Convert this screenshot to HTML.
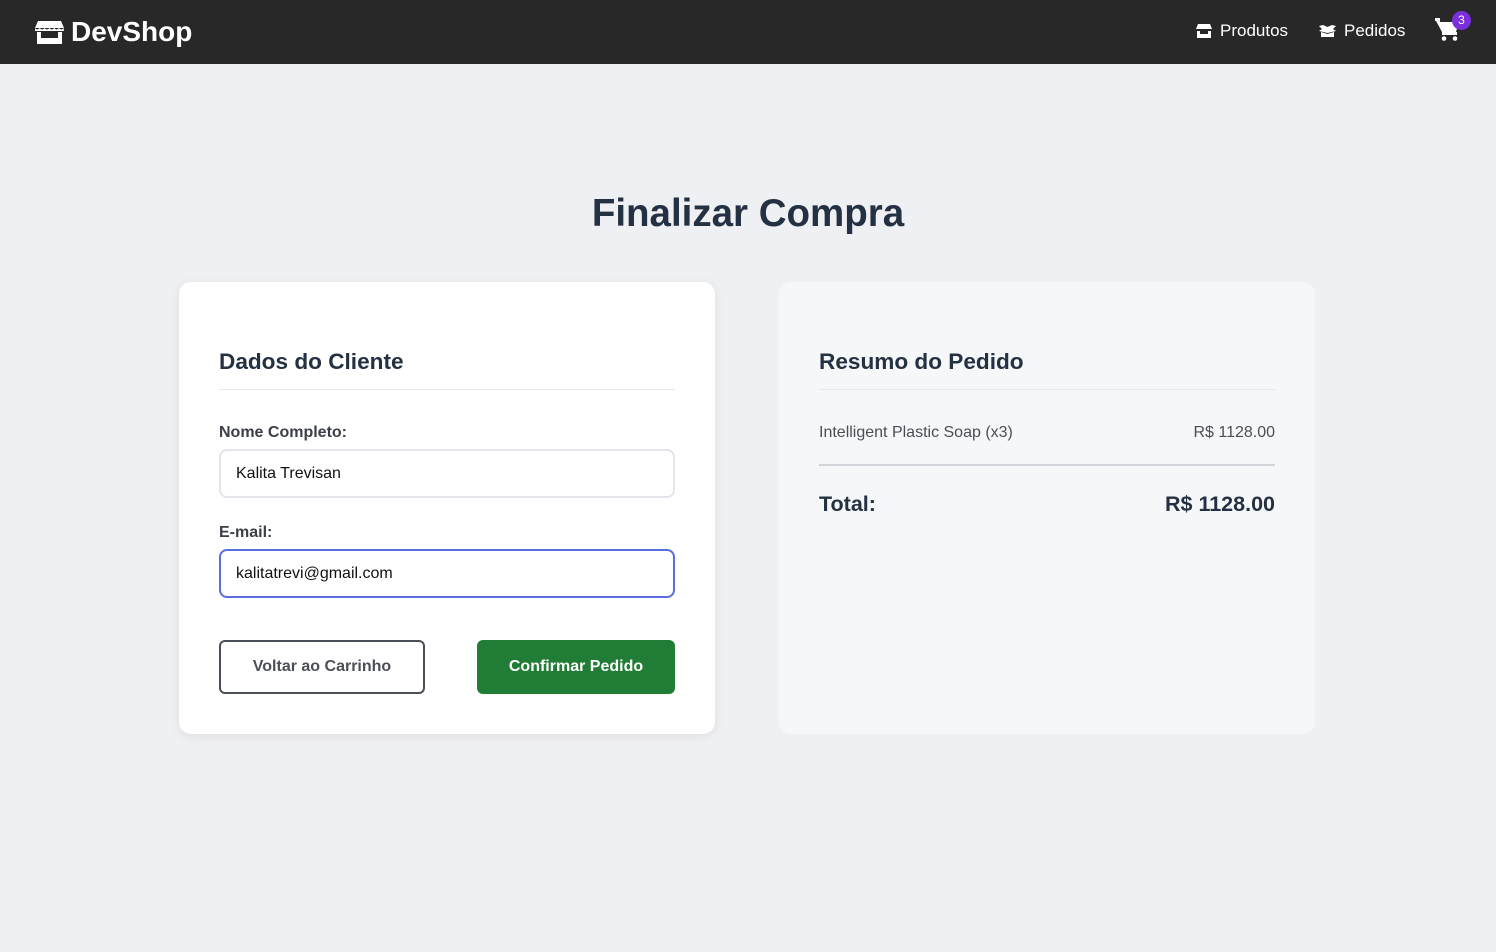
<!DOCTYPE html>
<html><head><meta charset="utf-8"><style>
*{box-sizing:border-box;margin:0;padding:0}
body{width:1496px;height:952px;background:#eff0f4;font-family:"Liberation Sans",sans-serif;position:relative;overflow:hidden}
.nav{position:absolute;left:0;top:0;width:1496px;height:64px;background:#282828;color:#fff}
.logo{position:absolute;left:35px;top:16px;font-size:28px;font-weight:bold;display:flex;align-items:center;gap:7px}
.nl{position:absolute;top:21px;font-size:17px;display:flex;align-items:center;gap:8px}
.badge{position:absolute;left:1452px;top:11px;width:19px;height:19px;border-radius:50%;background:#7b2fdc;color:#fff;font-size:12px;text-align:center;line-height:19px}
h1{position:absolute;top:192px;width:100%;text-align:center;font-size:38.5px;color:#243142;font-weight:bold}
.card{position:absolute;top:282px;width:536px;height:452px;border-radius:12px;padding:0 40px}
.c1{left:179px;background:#fff;box-shadow:0 2px 10px rgba(0,0,0,.08)}
.c2{left:779px;background:#f6f7f9}
h2{font-size:22.6px;font-weight:bold;color:#243142;margin-top:67px;padding-bottom:14px;border-bottom:1px solid #e5e7eb}
label{display:block;font-size:16px;font-weight:bold;color:#3b3f46;position:absolute;left:40px}
.inp{position:absolute;left:40px;width:456px;height:49px;border:2px solid #e2e6ec;border-radius:8px;padding-left:15px;font-size:16px;line-height:45px;color:#111}
.btn{position:absolute;top:358px;height:54px;border-radius:6px;font-size:16px;font-weight:bold;text-align:center;line-height:50px}
.row{position:absolute;left:40px;right:40px;display:flex;justify-content:space-between}
</style></head><body>
<div class="nav">
 <div class="logo"><svg width="29" height="26" viewBox="0 0 29 26"><path d="M3 2h23l3 7H0z" fill="#fff"/><path d="M0 9q2 3 4.8 0q2.4 3 4.8 0q2.4 3 4.8 0q2.4 3 4.8 0q2.4 3 4.8 0q2.4 3 4.8 0v3H0z" fill="#fff"/><path d="M2 13h4v6h17v-6h4v12H2z" fill="#fff"/></svg>DevShop</div>
 <div class="nl" style="left:1196px"><svg width="16" height="14" viewBox="0 0 16 14"><path d="M2 0h12l2 5H0z" fill="#fff"/><path d="M1 7h3v3h8V7h3v7H1z" fill="#fff"/></svg>Produtos</div>
 <div class="nl" style="left:1319px"><svg width="17" height="12" viewBox="0 0 17 12"><path d="M0 1l4-1 4.5 2 4.5-2 4 1-3 3 3 2-8.5 2L0 6l3-2z" fill="#fff"/><path d="M2 7l6.5 2 6.5-2v5H2z" fill="#fff"/></svg>Pedidos</div>
 <svg style="position:absolute;left:1435px;top:18px" width="25" height="23" viewBox="0 0 25 23"><path d="M0 1h4l1 3h19l-3 10H7z" fill="#fff"/><path d="M0 0h5v3H0z" fill="#fff"/><path d="M7 14h15v3H7z" fill="#fff"/><circle cx="9" cy="20.5" r="2.3" fill="#fff"/><circle cx="20" cy="20.5" r="2.3" fill="#fff"/></svg>
 <div class="badge">3</div>
</div>
<h1>Finalizar Compra</h1>
<div class="card c1">
 <h2>Dados do Cliente</h2>
 <label style="top:142px">Nome Completo:</label>
 <div class="inp" style="top:167px">Kalita Trevisan</div>
 <label style="top:242px">E-mail:</label>
 <div class="inp" style="top:267px;border-color:#5a6ee0">kalitatrevi@gmail.com</div>
 <div class="btn" style="left:40px;width:206px;border:2px solid #4b5058;color:#4b5058;background:#fff">Voltar ao Carrinho</div>
 <div class="btn" style="left:298px;width:198px;background:#217d36;color:#fff;line-height:54px">Confirmar Pedido</div>
</div>
<div class="card c2">
 <h2>Resumo do Pedido</h2>
 <div class="row" style="top:142px;font-size:16px;color:#4a4f57"><span>Intelligent Plastic Soap (x3)</span><span>R$ 1128.00</span></div>
 <div style="position:absolute;left:40px;right:40px;top:182px;border-top:2px solid #d1d5db"></div>
 <div class="row" style="top:210px;font-size:21.5px;font-weight:bold;color:#243142"><span>Total:</span><span>R$ 1128.00</span></div>
</div>
</body></html>
